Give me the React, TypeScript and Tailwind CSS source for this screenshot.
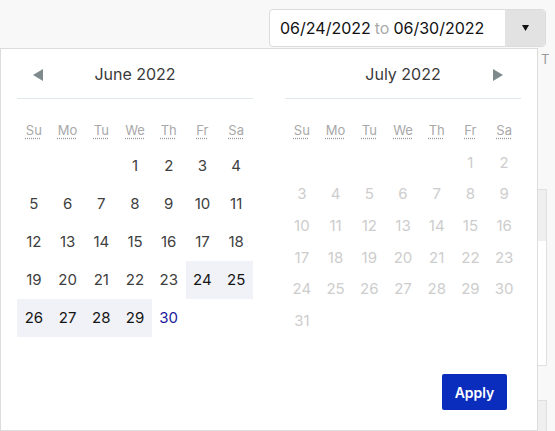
import React from "react";

const font = { fontFamily: "Inter, 'Noto Sans', sans-serif" };
const heads = ["Su", "Mo", "Tu", "We", "Th", "Fr", "Sa"];

type Cell = { d: number | null; cls?: string };

function Arrow({ dir }: { dir: "l" | "r" }) {
  return (
    <svg width="10" height="12" viewBox="0 0 10 12">
      {dir === "l" ? (
        <polygon points="10,0 10,12 0,6" fill="#7e8a8c" />
      ) : (
        <polygon points="0,0 0,12 10,6" fill="#7e8a8c" />
      )}
    </svg>
  );
}

function Month({ title, cells, arrow }: { title: string; cells: Cell[]; arrow: "l" | "r" }) {
  const rows: Cell[][] = [];
  for (let i = 0; i < cells.length; i += 7) rows.push(cells.slice(i, i + 7));
  return (
    <div className="w-[236px]">
      <div className="relative flex h-[50px] items-center justify-center border-b border-[#dfe9ec]">
        {arrow === "l" ? (
          <div className="absolute left-[16px] top-[20px] flex">
            <Arrow dir="l" />
          </div>
        ) : (
          <div className="absolute right-[18px] top-[20px] flex">
            <Arrow dir="r" />
          </div>
        )}
        <span className="text-[16px] text-[#3a3a3a]">{title}</span>
      </div>
      <div className="mb-[9px] grid grid-cols-7 pt-[23px]">
        {heads.map((h) => (
          <div key={h} className="flex justify-center">
            <span className="text-[13px] leading-[16px] text-[#a8a8a8] underline decoration-dotted decoration-[#9a9a9a] underline-offset-[3px]">
              {h}
            </span>
          </div>
        ))}
      </div>
      <div className="flex h-[190px] flex-col">
        {rows.map((r, i) => (
          <div key={i} className="grid flex-1 grid-cols-7">
            {r.map((c, j) => (
              <div
                key={j}
                className={`flex items-center justify-center text-[15px] ${c.cls ?? "text-[#404040]"}`}
              >
                {c.d ?? ""}
              </div>
            ))}
          </div>
        ))}
      </div>
    </div>
  );
}

export default function App() {
  const june: Cell[] = [];
  for (let i = 0; i < 3; i++) june.push({ d: null });
  for (let d = 1; d <= 30; d++) {
    let cls: string | undefined;
    if (d >= 24 && d <= 29) cls = "bg-[#f0f2f8] text-[#151515]";
    if (d === 30) cls = "text-[#1c1c9c]";
    june.push({ d, cls });
  }
  while (june.length < 35) june.push({ d: null });

  const july: Cell[] = [];
  for (let i = 0; i < 5; i++) july.push({ d: null });
  for (let d = 1; d <= 31; d++) july.push({ d, cls: "text-[#cdcdcd]" });
  while (july.length < 42) july.push({ d: null });

  return (
    <div className="relative h-[431px] w-[555px] overflow-hidden bg-[#f8f8f8]" style={font}>
      <div className="flex justify-end pr-[9px] pt-[9px]">
        <div className="flex h-[38px] w-[277px] overflow-hidden rounded-[4px] border border-[#dcdcdc] bg-white">
          <div className="flex flex-1 items-center pl-[10px] text-[16px] text-[#111]">
            06/24/2022<span className="mx-[4px] text-[#aaa]">to</span>06/30/2022
          </div>
          <div className="flex w-[40px] items-center justify-center bg-[#e2e2e2]">
            <svg width="7" height="6" viewBox="0 0 7 6">
              <polygon points="0,0 7,0 3.5,6" fill="#111" />
            </svg>
          </div>
        </div>
      </div>
      <div className="absolute left-[541px] top-[50px] text-[13px] text-[#999]">T</div>
      <div className="absolute left-[537px] top-[189px] h-[177px] w-[10px] border border-[#e0e0e0] bg-white">
        <div className="h-[51px] bg-[#efefef]" />
      </div>
      <div className="absolute left-[537px] top-[400px] h-[40px] w-[10px] border border-[#e0e0e0] bg-[#efefef]" />

      <div className="absolute left-0 top-[48px] h-[383px] w-[538px] border border-[#dcdcdc] bg-white">
        <div className="flex gap-[32px] px-[16px]">
          <Month title="June 2022" cells={june} arrow="l" />
          <Month title="July 2022" cells={july} arrow="r" />
        </div>
        <div className="absolute left-[441px] top-[325px] flex h-[36px] w-[65px] items-center justify-center rounded-[2px] bg-[#0a2dbd] text-[14px] font-semibold text-white">
          Apply
        </div>
      </div>
    </div>
  );
}
